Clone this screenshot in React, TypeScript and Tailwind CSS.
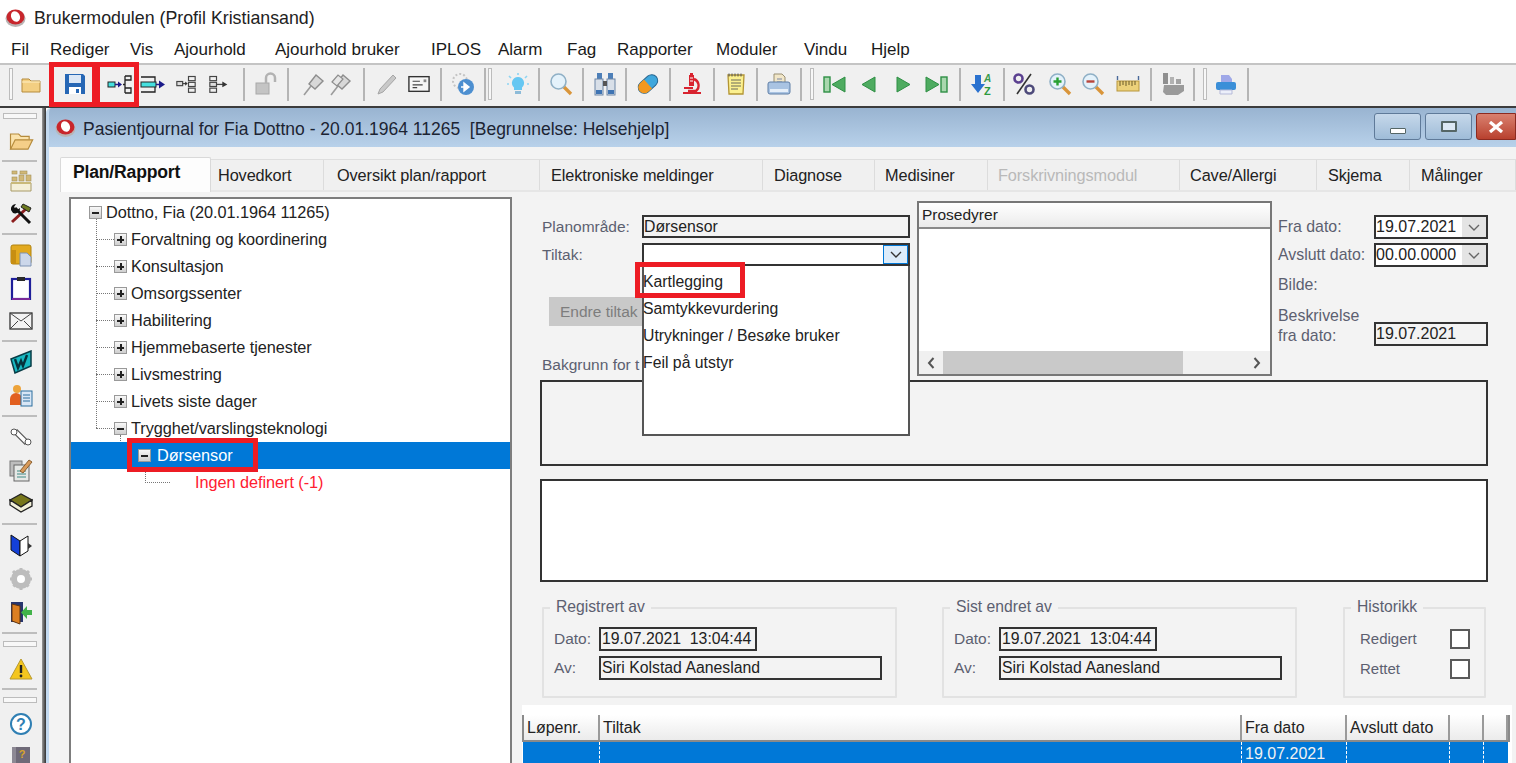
import React from 'react';

const FONT = "font-['Liberation_Sans',Arial,sans-serif]";

function Svg({ children, size = 24 }: { children: React.ReactNode; size?: number }) {
  return (
    <svg width={size} height={size} viewBox="0 0 24 24" fill="none">
      {children}
    </svg>
  );
}

/* ---------- logo ---------- */
function Logo() {
  return (
    <svg width="21" height="20" viewBox="0 0 21 20">
      <ellipse cx="10.5" cy="10.5" rx="10" ry="8.5" fill="#b9b4b4" />
      <ellipse cx="10.5" cy="9" rx="9" ry="7.6" fill="#c8262c" />
      <ellipse cx="10.5" cy="8.5" rx="4.4" ry="5.4" fill="#fff" transform="rotate(-25 10.5 8.5)" />
    </svg>
  );
}

/* ---------- toolbar icons ---------- */
const FolderClosed = () => (
  <Svg>
    <path d="M3 7h7l2 2h9v11H3z" fill="#f3cf82" stroke="#b58b3c" />
    <path d="M3 10h18" stroke="#fff0c4" />
  </Svg>
);
const FolderOpen = () => (
  <Svg size={28}>
    <path d="M3 19V6h7l2 2h7v3" fill="#fbe3ac" stroke="#b58b3c" />
    <path d="M3 19l4-8h15l-4 8z" fill="#f5cf88" stroke="#b58b3c" />
  </Svg>
);
const Save = () => (
  <Svg>
    <path d="M2 2h18l2 2v18H2z" fill="#2667b5" />
    <rect x="6" y="3" width="12" height="8" fill="#dbe7f6" />
    <rect x="6" y="15" width="12" height="7" fill="#fff" />
    <rect x="13" y="17" width="3" height="4" fill="#2667b5" />
  </Svg>
);
const TreeArrow = () => (
  <svg width="26" height="24" viewBox="0 0 26 24" fill="none">
    <rect x="1" y="10" width="7" height="5" fill="#45e0df" stroke="#222" />
    <path d="M8 12.5h4" stroke="#1b1b8a" strokeWidth="1.5" />
    <path d="M11 9.5l4 3-4 3z" fill="#1b1b8a" />
    <path d="M16 12.5h2M18 4v17M18 4h6v4h-6M18 16h6v5h-6" stroke="#222" strokeWidth="1.3" />
  </svg>
);
const BoxArrow = () => (
  <svg width="26" height="24" viewBox="0 0 26 24" fill="none">
    <path d="M1 5h14v15H1" stroke="#222" strokeWidth="1.3" />
    <rect x="1" y="10" width="15" height="5" fill="#45e0df" stroke="#222" />
    <path d="M16 12.5h5" stroke="#1b1b8a" strokeWidth="1.5" />
    <path d="M19 8.5l6 4-6 4z" fill="#1b1b8a" />
  </svg>
);
const TreeSmallA = () => (
  <Svg size={20}>
    <rect x="1" y="9" width="7" height="5" fill="#ddd" stroke="#444" strokeWidth="1.4" />
    <path d="M8 11.5h4" stroke="#444" strokeWidth="1.5" />
    <path d="M11 9l3 2.5-3 2.5z" fill="#333" />
    <rect x="15" y="3" width="8" height="5" stroke="#444" strokeWidth="1.4" />
    <rect x="15" y="10" width="8" height="5" stroke="#444" strokeWidth="1.4" />
    <rect x="15" y="17" width="8" height="5" stroke="#444" strokeWidth="1.4" />
  </Svg>
);
const TreeSmallB = () => (
  <Svg size={20}>
    <rect x="1" y="3" width="8" height="5" stroke="#444" strokeWidth="1.4" />
    <rect x="1" y="10" width="8" height="5" fill="#ddd" stroke="#444" strokeWidth="1.4" />
    <rect x="1" y="17" width="8" height="5" stroke="#444" strokeWidth="1.4" />
    <path d="M9 12.5h8" stroke="#444" strokeWidth="1.5" />
    <path d="M16 9l6 3.5-6 3.5z" fill="#333" />
  </Svg>
);
const Lock = () => (
  <Svg>
    <rect x="2" y="11" width="13" height="11" fill="#c4c4c4" stroke="#a8a8a8" />
    <path d="M12 11V6a4.5 4.5 0 0 1 9 0v4" stroke="#b2b2b2" strokeWidth="2.5" />
  </Svg>
);
const Pin = ({ double }: { double?: boolean }) => (
  <Svg>
    <path d="M2 23l7-9" stroke="#9b9b9b" strokeWidth="1.6" />
    <path d="M7 12l7-9 7 6-8 8z" fill="#d8d8d8" stroke="#8d8d8d" strokeWidth="1.4" />
    {double && <path d="M3 10l6-7 5 4-6 7z" fill="#e6e6e6" stroke="#8d8d8d" strokeWidth="1.2" />}
  </Svg>
);
const Pencil = () => (
  <Svg>
    <path d="M3 22l2-5L18 3l3 3L8 20z" fill="#c9c9c9" stroke="#a5a5a5" />
  </Svg>
);
const Card = () => (
  <Svg>
    <rect x="1" y="4" width="22" height="16" fill="#f6f6f6" stroke="#333" strokeWidth="1.5" />
    <path d="M5 9h8M5 13h11M5 16h5" stroke="#444" strokeWidth="1.3" />
    <rect x="17" y="7" width="3" height="3" fill="#888" />
  </Svg>
);
const GlobeArrow = () => (
  <Svg>
    <circle cx="9" cy="9" r="7" fill="none" stroke="#c4c4c4" strokeDasharray="2 2" strokeWidth="2" />
    <circle cx="15" cy="15" r="8" fill="#4d8fd0" />
    <path d="M10 15h6M13 11l5 4-5 4z" fill="#fff" stroke="#fff" strokeWidth="1.4" />
  </Svg>
);
const Bulb = () => (
  <Svg>
    <path d="M12 5a6 6 0 0 0-4 10.5V18h8v-2.5A6 6 0 0 0 12 5z" fill="#66c7f2" />
    <rect x="9" y="19" width="6" height="3" fill="#8dbbd8" />
    <path d="M12 1v2M3 4l2 2M21 4l-2 2M1 12h2M21 12h2" stroke="#8ed4f2" strokeWidth="1.6" />
  </Svg>
);
const Magnifier = ({ mark }: { mark?: '+' | '-' }) => (
  <Svg>
    <path d="M14 14l8 8" stroke="#d9953a" strokeWidth="3.4" />
    <circle cx="9.5" cy="9.5" r="7.5" fill="#e4f2fb" stroke="#8fb0c6" strokeWidth="1.6" />
    {mark === '+' && <path d="M5.5 9.5h8M9.5 5.5v8" stroke="#28a033" strokeWidth="2.4" />}
    {mark === '-' && <path d="M5.5 9.5h8" stroke="#b8453b" strokeWidth="2.4" />}
  </Svg>
);
const Binoculars = () => (
  <Svg>
    <rect x="4" y="1" width="5" height="6" fill="#4d7fb8" />
    <rect x="15" y="1" width="5" height="6" fill="#4d7fb8" />
    <rect x="2" y="7" width="8" height="16" fill="#d8dfe8" stroke="#6d86a6" />
    <rect x="14" y="7" width="8" height="16" fill="#d8dfe8" stroke="#6d86a6" />
    <rect x="10" y="9" width="4" height="5" fill="#555" />
    <rect x="3" y="18" width="6" height="4" fill="#3f74b3" />
    <rect x="15" y="18" width="6" height="4" fill="#3f74b3" />
  </Svg>
);
const Pill = () => (
  <Svg>
    <g transform="rotate(-42 12 12)">
      <rect x="1" y="6" width="22" height="12" rx="6" fill="#3fa7dc" stroke="#23648f" />
      <path d="M12 6H7a6 6 0 0 0 0 12h5z" fill="#f2981f" />
    </g>
  </Svg>
);
const Microscope = () => (
  <Svg>
    <path d="M3 22h18v-2H3z" fill="#d8232f" />
    <path d="M9 3h5v11H9z" fill="#d8232f" />
    <path d="M14 7a7 7 0 0 1 2 12H8" stroke="#d8232f" strokeWidth="2.4" />
    <path d="M4 15h9v2H4z" fill="#d8232f" />
    <rect x="10" y="1" width="3" height="2" fill="#d8232f" />
    <path d="M10 6h3M10 9h3" stroke="#fff" />
  </Svg>
);
const Notepad = () => (
  <Svg>
    <path d="M4 3h16l-1 19H5z" fill="#fbf08f" stroke="#b39534" strokeWidth="1.3" />
    <path d="M7 8h10M7 11h10M7 14h10M7 17h7" stroke="#6a6a5a" />
    <path d="M5 1.5v3M8 1.5v3M11 1.5v3M14 1.5v3M17 1.5v3" stroke="#555" />
  </Svg>
);
const Printer = () => (
  <Svg>
    <path d="M7 2h8l3 3v7H7z" fill="#f1e6c8" stroke="#9a8f72" />
    <path d="M10 7h5M10 10h5" stroke="#7b86a5" />
    <rect x="1" y="10" width="22" height="12" rx="2" fill="#a9c3e2" stroke="#5f7ea6" />
    <rect x="3" y="17" width="18" height="3" fill="#e6eff9" />
  </Svg>
);
const NavFirst = () => (
  <Svg>
    <rect x="1" y="5" width="6" height="15" fill="#a9d7ae" stroke="#2e8f45" strokeWidth="1.4" />
    <path d="M22 5v15L9 12.5z" fill="#4eab60" stroke="#2e8f45" />
  </Svg>
);
const NavPrev = () => (
  <Svg>
    <path d="M18 5v15L5 12.5z" fill="#4eab60" stroke="#2e8f45" />
  </Svg>
);
const NavNext = () => (
  <Svg>
    <path d="M6 5v15l13-7.5z" fill="#4eab60" stroke="#2e8f45" />
  </Svg>
);
const NavLast = () => (
  <Svg>
    <path d="M2 5v15l13-7.5z" fill="#4eab60" stroke="#2e8f45" />
    <rect x="17" y="5" width="6" height="15" fill="#a9d7ae" stroke="#2e8f45" strokeWidth="1.4" />
  </Svg>
);
const SortAZ = () => (
  <Svg>
    <path d="M5 3h6v9h4l-7 9-7-9h4z" fill="#2b72cf" />
    <text x="14" y="10" fontSize="10" fontWeight="700" fontStyle="italic" fill="#3a9a4a" fontFamily="Liberation Sans">A</text>
    <text x="14" y="23" fontSize="11" fontWeight="700" fill="#2d9a3e" fontFamily="Liberation Sans">Z</text>
  </Svg>
);
const Percent = () => (
  <Svg>
    <circle cx="6.5" cy="6.5" r="4" stroke="#5b4090" strokeWidth="2.6" />
    <circle cx="17.5" cy="17.5" r="4" stroke="#4d4a7a" strokeWidth="2.6" />
    <path d="M19 2L5 22" stroke="#333" strokeWidth="1.6" />
  </Svg>
);
const Ruler = () => (
  <Svg>
    <rect x="1" y="9" width="22" height="10" fill="#ecd17a" stroke="#b8963c" />
    <path d="M4 9v5M7 9v4M10 9v5M13 9v4M16 9v5M19 9v4" stroke="#6a5a2a" />
    <path d="M1.5 4v4M22.5 4v4" stroke="#4a6a9a" strokeWidth="1.4" />
  </Svg>
);
const GrayMachine = () => (
  <Svg>
    <rect x="2" y="1" width="5" height="11" fill="#8f8f8f" />
    <rect x="9" y="5" width="4" height="7" fill="#b2b2b2" />
    <rect x="15" y="7" width="5" height="5" fill="#a3a3a3" />
    <path d="M3 13h20v6l-6 4H5l-3-3z" fill="#9a9a9a" />
  </Svg>
);
const Printer2 = () => (
  <Svg>
    <path d="M7 3h8l3 4v5H7z" fill="#9fa8e8" />
    <rect x="2" y="10" width="20" height="8" rx="2" fill="#3b8fd8" />
    <path d="M6 18h12v4H6z" fill="#eceffa" stroke="#b5b9d8" />
  </Svg>
);

/* ---------- left bar icons ---------- */
const Bricks = () => (
  <Svg>
    <path d="M2 14h20v8H2z" fill="#f4efd9" stroke="#a89a66" />
    <path d="M2 14h20" stroke="#c9b97a" strokeWidth="2" />
    <g fill="#d1b877" stroke="#a3915a" strokeWidth=".6">
      <rect x="3" y="2" width="5" height="3" />
      <rect x="11" y="2" width="7" height="3" />
      <rect x="3" y="8" width="5" height="4" />
      <rect x="10" y="6" width="5" height="6" />
      <rect x="17" y="6" width="5" height="6" />
    </g>
  </Svg>
);
const Tools = () => (
  <Svg>
    <path d="M3 20L19 5" stroke="#8c1d1d" strokeWidth="3" />
    <path d="M14 2l8 4-2 4-8-5z" fill="#6d7a1f" stroke="#222" />
    <path d="M21 21L6 6" stroke="#111" strokeWidth="3" />
    <path d="M2 8a5 5 0 0 1 5-6L5 5l3 3 3-2a5 5 0 0 1-7 5z" fill="#111" />
  </Svg>
);
const FolderDoc = () => (
  <Svg>
    <rect x="2" y="2" width="20" height="19" rx="2" fill="#e2a91f" stroke="#b0820f" />
    <path d="M2 7h5v14H2z" fill="#c78e12" />
    <path d="M11 10h7l4 4v9H11z" fill="#ccd7ea" stroke="#7f93b4" />
  </Svg>
);
const Clipboard = () => (
  <Svg>
    <rect x="3" y="3" width="18" height="20" fill="#fff" stroke="#1f1f9a" strokeWidth="2.2" />
    <path d="M3 23h18" stroke="#7a2a9a" strokeWidth="2" />
    <rect x="8" y="1" width="8" height="4" fill="#2a2a2a" />
  </Svg>
);
const Envelope = () => (
  <Svg>
    <rect x="1" y="4" width="22" height="16" fill="#f3f3f3" stroke="#333" strokeWidth="1.3" />
    <path d="M1 4l11 8 11-8M1 20l8-8M23 20l-8-8" stroke="#444" />
  </Svg>
);
const WBook = () => (
  <Svg>
    <path d="M2 9l20-8v15L6 23z" fill="#17b8c1" stroke="#083c46" strokeWidth="1.5" />
    <path d="M6 9l3 9 3-7 2 5 4-11" stroke="#06333c" strokeWidth="2.4" />
  </Svg>
);
const PersonCard = () => (
  <Svg>
    <circle cx="8" cy="6" r="4" fill="#eda33a" />
    <path d="M1 22v-6a6 6 0 0 1 12 0v6z" fill="#e25f1f" />
    <rect x="12" y="8" width="11" height="15" fill="#d8e6f5" stroke="#2c6f9e" />
    <path d="M14 12h7M14 15h7M14 18h7" stroke="#2c6f9e" />
  </Svg>
);
const Bone = () => (
  <Svg>
    <path d="M6 6l12 12" stroke="#555" strokeWidth="6" />
    <path d="M6 6l12 12" stroke="#fff" strokeWidth="3.6" />
    <circle cx="5" cy="7" r="3" fill="#fff" stroke="#555" />
    <circle cx="19" cy="17" r="3" fill="#fff" stroke="#555" />
  </Svg>
);
const NotePen = () => (
  <Svg>
    <rect x="1" y="3" width="12" height="15" fill="#bdbdbd" stroke="#777" />
    <rect x="5" y="7" width="15" height="16" fill="#e6e8e6" stroke="#666" />
    <path d="M8 13h9M8 16h9M8 19h9" stroke="#3e8a84" />
    <path d="M11 13l9-11 3 2-9 11z" fill="#d99a5a" stroke="#8a5f2f" />
  </Svg>
);
const OliveBook = () => (
  <Svg>
    <path d="M1 9l11-6 11 6-11 7z" fill="#77761a" stroke="#222" strokeWidth="1.3" />
    <path d="M1 9v5l11 7 11-6V9l-11 7z" fill="#f2f0d8" stroke="#222" strokeWidth="1.3" />
  </Svg>
);
const BlueBook = () => (
  <Svg>
    <path d="M2 2l9 6v15L2 17z" fill="#1440d8" stroke="#111" />
    <path d="M11 8l8-5v15l-8 5z" fill="#fff" stroke="#111" />
    <path d="M19 10l4 3-4 3z" fill="#333" />
  </Svg>
);
const Gear = () => (
  <Svg>
    <circle cx="12" cy="12" r="7" fill="#fff" stroke="#bdbdbd" strokeWidth="6" />
    <path d="M12 1v22M1 12h22M4 4l16 16M20 4L4 20" stroke="#bdbdbd" strokeWidth="3" strokeDasharray="3 16" />
  </Svg>
);
const Door = () => (
  <Svg>
    <path d="M2 1h12v20H2z" fill="#27366e" />
    <path d="M3 3l8 2v18l-8-3z" fill="#dc7f22" stroke="#5e3410" />
    <path d="M23 9h-5V5l-6 6.5 6 6.5v-4h5z" fill="#42b34a" />
  </Svg>
);
const Warning = () => (
  <Svg>
    <path d="M12 2l11 20H1z" fill="#f4c61f" stroke="#b89a30" />
    <path d="M12 8v8" stroke="#222" strokeWidth="2.4" />
    <circle cx="12" cy="19" r="1.4" fill="#222" />
  </Svg>
);
const Help = () => (
  <Svg>
    <circle cx="12" cy="12" r="10" fill="#fff" stroke="#2f7fb3" strokeWidth="2" />
    <text x="12" y="18" textAnchor="middle" fontSize="16" fontWeight="700" fill="#2f7fb3" fontFamily="Liberation Sans">?</text>
  </Svg>
);
const HelpBook = () => (
  <Svg>
    <rect x="3" y="3" width="18" height="21" fill="#6f6a78" />
    <rect x="3" y="3" width="4" height="21" fill="#8d8994" />
    <text x="13" y="14" textAnchor="middle" fontSize="11" fontWeight="700" fill="#d8a52a" fontFamily="Liberation Sans">?</text>
  </Svg>
);

/* ---------- shell pieces ---------- */
const menus: [string, string][] = [
  ['Fil', 'w-[39px]'],
  ['Rediger', 'w-[80px]'],
  ['Vis', 'w-[44px]'],
  ['Ajourhold', 'w-[101px]'],
  ['Ajourhold bruker', 'w-[156px]'],
  ['IPLOS', 'w-[67px]'],
  ['Alarm', 'w-[69px]'],
  ['Fag', 'w-[50px]'],
  ['Rapporter', 'w-[99px]'],
  ['Moduler', 'w-[88px]'],
  ['Vindu', 'w-[67px]'],
  ['Hjelp', 'w-[50px]'],
];

function Grip() {
  return <div className="mx-[2px] h-[32px] w-[4px] shrink-0 border border-[#bcbcbc] bg-[#f7f7f7]" />;
}
function Sep({ className = '' }: { className?: string }) {
  return <div className={`h-[33px] w-[2px] shrink-0 bg-[#b5b5b5] ${className}`} />;
}
function TB({ w, children }: { w: string; children: React.ReactNode }) {
  return <div className={`flex h-[34px] shrink-0 items-center justify-center ${w}`}>{children}</div>;
}

function Toolbar() {
  return (
    <div className="flex h-[43px] items-center border-t-2 border-[#c4c4c4] bg-[#f0f0f0] pb-[3px] pl-[7px]">
      <Grip />
      <TB w="w-[33px] ml-[-1px]"><FolderClosed /></TB>
      <TB w="w-[33px] ml-[11px]"><Save /></TB>
      <TB w="w-[33px] ml-[12px]"><TreeArrow /></TB>
      <TB w="w-[33px]"><BoxArrow /></TB>
      <TB w="w-[33px]"><TreeSmallA /></TB>
      <TB w="w-[34px]"><TreeSmallB /></TB>
      <Sep className="ml-[7px]" />
      <TB w="w-[42px]"><Lock /></TB>
      <Sep />
      <TB w="w-[27px] ml-[11px]"><Pin /></TB>
      <TB w="w-[28px]"><Pin double /></TB>
      <Sep className="ml-[8px]" />
      <TB w="w-[43px]"><Pencil /></TB>
      <TB w="w-[22px]"><Card /></TB>
      <Sep className="ml-[10px]" />
      <TB w="w-[42px]"><GlobeArrow /></TB>
      <Sep />
      <Grip />
      <TB w="w-[33px] ml-[7px]"><Bulb /></TB>
      <Sep className="ml-[4px]" />
      <TB w="w-[42px]"><Magnifier /></TB>
      <Sep />
      <TB w="w-[41px]"><Binoculars /></TB>
      <Sep />
      <TB w="w-[42px]"><Pill /></TB>
      <Sep />
      <TB w="w-[42px]"><Microscope /></TB>
      <Sep />
      <TB w="w-[41px]"><Notepad /></TB>
      <Sep />
      <TB w="w-[42px]"><Printer /></TB>
      <Sep />
      <div className="ml-[6px]"><Grip /></div>
      <TB w="w-[34px] ml-[2px]"><NavFirst /></TB>
      <TB w="w-[33px]"><NavPrev /></TB>
      <TB w="w-[35px]"><NavNext /></TB>
      <TB w="w-[31px]"><NavLast /></TB>
      <Sep className="ml-[8px]" />
      <TB w="w-[42px]"><SortAZ /></TB>
      <Sep />
      <TB w="w-[38px]"><Percent /></TB>
      <TB w="w-[33px]"><Magnifier mark="+" /></TB>
      <TB w="w-[34px]"><Magnifier mark="-" /></TB>
      <TB w="w-[36px]"><Ruler /></TB>
      <Sep className="ml-[4px]" />
      <TB w="w-[41px]"><GrayMachine /></TB>
      <Sep />
      <div className="ml-[6px]"><Grip /></div>
      <TB w="w-[33px]"><Printer2 /></TB>
      <Sep className="ml-[5px]" />
    </div>
  );
}

function SideIcon({ h = 'h-[33px]', children }: { h?: string; children: React.ReactNode }) {
  return <div className={`flex shrink-0 items-center justify-center ${h}`}>{children}</div>;
}
function SideSep({ h }: { h: string }) {
  return (
    <div className={`flex shrink-0 items-center ${h}`}>
      <div className="mx-[2px] h-[2px] w-[35px] bg-[#bdbdbd]" />
    </div>
  );
}
function SideGrip() {
  return (
    <div className="flex h-[16px] shrink-0 items-center">
      <div className="ml-[3px] h-[6px] w-[34px] border border-[#bcbcbc] bg-[#f8f8f8]" />
    </div>
  );
}

function SideBar() {
  return (
    <div className="flex w-[42px] shrink-0 flex-col bg-[#f0f0f0]">
      <SideGrip />
      <SideIcon><FolderOpen /></SideIcon>
      <SideSep h="h-[7px]" />
      <SideIcon><Bricks /></SideIcon>
      <SideIcon><Tools /></SideIcon>
      <SideSep h="h-[8px]" />
      <SideIcon><FolderDoc /></SideIcon>
      <SideIcon><Clipboard /></SideIcon>
      <SideIcon><Envelope /></SideIcon>
      <SideSep h="h-[8px]" />
      <SideIcon><WBook /></SideIcon>
      <SideIcon><PersonCard /></SideIcon>
      <SideSep h="h-[9px]" />
      <SideIcon><Bone /></SideIcon>
      <SideIcon><NotePen /></SideIcon>
      <SideIcon><OliveBook /></SideIcon>
      <SideSep h="h-[9px]" />
      <SideIcon><BlueBook /></SideIcon>
      <SideIcon h="h-[35px]"><Gear /></SideIcon>
      <SideIcon><Door /></SideIcon>
      <SideSep h="h-[7px]" />
      <SideGrip />
      <SideIcon><Warning /></SideIcon>
      <SideSep h="h-[7px]" />
      <SideGrip />
      <SideIcon h="h-[32px]"><Help /></SideIcon>
      <SideIcon h="h-[32px]"><HelpBook /></SideIcon>
    </div>
  );
}

function WinButton({ className, children }: { className: string; children: React.ReactNode }) {
  return (
    <div className={`flex h-[27px] items-center justify-center rounded-[3px] border border-[#5f7a99] ${className}`}>
      {children}
    </div>
  );
}

const tabs: [string, string, string, string?][] = [
  ['Hovedkort', 'w-[113px]', 'pl-[7px]'],
  ['Oversikt plan/rapport', 'w-[216px]', 'pl-[13px]'],
  ['Elektroniske meldinger', 'w-[223px]', 'pl-[11px]'],
  ['Diagnose', 'w-[112px]', 'pl-[11px]'],
  ['Medisiner', 'w-[113px]', 'pl-[10px]'],
  ['Forskrivningsmodul', 'w-[192px]', 'pl-[10px]', 'text-[#b9b9b9]'],
  ['Cave/Allergi', 'w-[137px]', 'pl-[10px]'],
  ['Skjema', 'w-[93px]', 'pl-[11px]'],
  ['Målinger', 'w-[106px]', 'pl-[11px]'],
];

function Tabs() {
  return (
    <div className="flex h-[45px] items-end pl-[11px]">
      <div className="z-10 flex h-[35px] w-[151px] shrink-0 items-center rounded-t-[2px] border-x border-t border-[#d9d9d9] bg-[#fdfdfd] pb-[5px] pl-[12px] text-[17.6px] font-bold tracking-[-0.2px] text-[#111]">
        Plan/Rapport
      </div>
      <div className="flex h-[33px] border-y border-t-[#dedede] border-b-[#e6e6e6] bg-[#f0f0f0] border-b-2">
        {tabs.map(([label, w, pl, color]) => (
          <div
            key={label}
            className={`flex h-full shrink-0 items-center border-r border-[#dcdcdc] text-[16.3px] tracking-[-0.1px] ${w} ${pl} ${color ?? 'text-[#222]'}`}
          >
            {label}
          </div>
        ))}
      </div>
    </div>
  );
}

/* ---------- tree ---------- */
function Expander({ open }: { open?: boolean }) {
  return (
    <div className="flex h-[13px] w-[13px] shrink-0 items-center justify-center border border-[#999] bg-gradient-to-b from-[#f8f8f8] to-[#cfcfcf]">
      <div className="relative h-[2px] w-[7px] bg-[#222]">
        {!open && <div className="absolute left-[2.5px] top-[-2.5px] h-[7px] w-[2px] bg-[#222]" />}
      </div>
    </div>
  );
}
const children = [
  'Forvaltning og koordinering',
  'Konsultasjon',
  'Omsorgssenter',
  'Habilitering',
  'Hjemmebaserte tjenester',
  'Livsmestring',
  'Livets siste dager',
];
function Tree() {
  return (
    <div className="relative ml-[20px] h-[568px] w-[443px] shrink-0 overflow-hidden border-2 border-[#7d7d7d] bg-white text-[16.3px] tracking-[-0.05px] text-[#222]">
      <div className="absolute left-[25px] top-[20px] h-[209px] border-l border-dotted border-[#777]" />
      <div className="absolute left-[49px] top-[236px] h-[20px] border-l border-dotted border-[#777]" />
      <div className="absolute left-[74px] top-[264px] h-[18px] border-l border-dotted border-[#777]" />
      <div className="flex h-[27px] items-center pl-[18px]">
        <Expander open />
        <span className="ml-[4px]">Dottno, Fia (20.01.1964 11265)</span>
      </div>
      {children.map(c => (
        <div key={c} className="flex h-[27px] items-center pl-[25px]">
          <div className="w-[18px] border-b border-dotted border-[#777]" />
          <Expander />
          <span className="ml-[4px]">{c}</span>
        </div>
      ))}
      <div className="flex h-[27px] items-center pl-[25px]">
        <div className="w-[18px] border-b border-dotted border-[#777]" />
        <Expander open />
        <span className="ml-[4px]">Trygghet/varslingsteknologi</span>
      </div>
      <div className="relative flex h-[27px] items-center bg-[#0078d7] pl-[67px] text-white">
        <Expander open />
        <span className="ml-[6px]">Dørsensor</span>
      </div>
      <div className="flex h-[27px] items-center pl-[74px] text-[#ff2030]">
        <div className="w-[25px] border-b border-dotted border-[#777]" />
        <span className="ml-[25px]">Ingen definert (-1)</span>
      </div>
      <div className="absolute left-[56px] top-[239px] h-[34px] w-[131px] border-[5px] border-[#ed1c24]" />
    </div>
  );
}

/* ---------- form ---------- */
function Chevron({ color = '#333' }: { color?: string }) {
  return (
    <svg width="12" height="7" viewBox="0 0 12 7" fill="none">
      <path d="M1 1l5 5 5-5" stroke={color} strokeWidth="1.4" />
    </svg>
  );
}

function Field({ className, children }: { className: string; children?: React.ReactNode }) {
  return (
    <div className={`flex items-center overflow-hidden whitespace-nowrap border-2 border-[#333] text-[15.8px] leading-none text-[#222] ${className}`}>
      {children}
    </div>
  );
}

function DateCombo({ value, className }: { value: string; className?: string }) {
  return (
    <Field className={`h-[24px] w-[114px] bg-white ${className ?? ''}`}>
      <span className="w-[86px] text-[16px]">{value}</span>
      <div className="flex h-full flex-1 items-center justify-center bg-[#e4e4e4]">
        <Chevron color="#666" />
      </div>
    </Field>
  );
}

function LeftForm() {
  return (
    <div className="relative ml-[18px] w-[370px] shrink-0 pt-[25px] text-[15.5px] text-[#5c6070]">
      <div className="flex h-[23px] items-center">
        <span className="ml-[2px] w-[100px]">Planområde:</span>
        <Field className="h-[23px] w-[268px] bg-[#f3f3f3]">Dørsensor</Field>
      </div>
      <div className="mt-[5px] flex h-[23px] items-center">
        <span className="ml-[2px] w-[100px] self-start">Tiltak:</span>
        <Field className="h-[23px] w-[268px] bg-white">
          <div className="ml-auto flex h-full w-[25px] items-center justify-center border border-[#0078d7] bg-[#dcecfa]">
            <Chevron />
          </div>
        </Field>
      </div>
      <div className="ml-[9px] mt-[31px] flex h-[29px] w-[120px] items-center bg-[#c9c9c9] pl-[11px] text-[#7d7d7d]">
        Endre tiltak
      </div>
      <div className="ml-[2px] mt-[27px] h-[20px]">Bakgrunn for t</div>
      {/* open dropdown list */}
      <div className="absolute left-[102px] top-[76px] z-20 h-[170px] w-[268px] border-2 border-t-0 border-[#555] bg-white pt-[2px] text-[15.8px] text-[#222]">
        {['Kartlegging', 'Samtykkevurdering', 'Utrykninger / Besøke bruker', 'Feil på utstyr'].map(t => (
          <div key={t} className="ml-[-1px] flex h-[27px] items-center">{t}</div>
        ))}
      </div>
      <div className="absolute left-[95px] top-[72px] z-30 h-[36px] w-[110px] border-[5px] border-[#ed1c24]" />
    </div>
  );
}

function Prosedyrer() {
  return (
    <div className="ml-[7px] mt-[11px] flex h-[175px] w-[355px] shrink-0 flex-col border-2 border-[#777] bg-white">
      <div className="flex h-[26px] items-center border-b-2 border-[#8a8a8a] bg-gradient-to-b from-white to-[#ebebeb] pl-[3px] text-[15.5px] text-[#222]">
        Prosedyrer
      </div>
      <div className="flex-1" />
      <div className="flex h-[23px] items-center bg-[#f0f0f0]">
        <div className="flex w-[24px] justify-center">
          <svg width="8" height="12" viewBox="0 0 8 12" fill="none"><path d="M6.5 1L2 6l4.5 5" stroke="#555" strokeWidth="2" /></svg>
        </div>
        <div className="h-full w-[240px] bg-[#c9c9c9]" />
        <div className="ml-auto flex w-[26px] justify-center">
          <svg width="8" height="12" viewBox="0 0 8 12" fill="none"><path d="M1.5 1L6 6l-4.5 5" stroke="#555" strokeWidth="2" /></svg>
        </div>
      </div>
    </div>
  );
}

function RightForm() {
  return (
    <div className="ml-[6px] w-[210px] shrink-0 pt-[25px] text-[15.9px] text-[#5c6070]">
      <div className="flex h-[24px] items-center">
        <span className="w-[96px]">Fra dato:</span>
        <DateCombo value="19.07.2021" />
      </div>
      <div className="mt-[4px] flex h-[24px] items-center">
        <span className="w-[96px]">Avslutt dato:</span>
        <DateCombo value="00.00.0000" />
      </div>
      <div className="mt-[6px] h-[20px]">Bilde:</div>
      <div className="mt-[13px] flex items-end">
        <div className="w-[96px] leading-[20px]">Beskrivelse<br />fra dato:</div>
        <Field className="h-[24px] w-[114px] bg-[#f3f3f3] text-[16px]">19.07.2021</Field>
      </div>
    </div>
  );
}

function Group({ title, className, children }: { title: string; className: string; children: React.ReactNode }) {
  return (
    <div className={`relative h-[91px] shrink-0 rounded-[1px] border-2 border-[#e2e2e2] ${className}`}>
      <div className="absolute left-[6px] top-[-12px] bg-[#f3f3f3] px-[6px] text-[15.7px] leading-[20px] text-[#5c6070]">{title}</div>
      {children}
    </div>
  );
}

function PersonGroup({ title, className, w }: { title: string; className: string; w: string }) {
  return (
    <Group title={title} className={className}>
      <div className="flex flex-col gap-[5px] pl-[10px] pt-[18px] text-[15.5px] text-[#5c6070]">
        <div className="flex h-[24px] items-center">
          <span className="w-[45px]">Dato:</span>
          <Field className="h-[24px] w-[158px] bg-[#f3f3f3] pl-[1px]">19.07.2021&nbsp;&nbsp;13:04:44</Field>
        </div>
        <div className="flex h-[24px] items-center">
          <span className="w-[45px]">Av:</span>
          <Field className={`h-[24px] bg-[#f3f3f3] pl-[1px] ${w}`}>Siri Kolstad Aanesland</Field>
        </div>
      </div>
    </Group>
  );
}

function Check() {
  return <div className="h-[20px] w-[20px] border-2 border-[#5a5a5a] bg-white" />;
}

const cols: [string, string][] = [
  ['Løpenr.', 'w-[76px]'],
  ['Tiltak', 'w-[642px]'],
  ['Fra dato', 'w-[105px]'],
  ['Avslutt dato', 'w-[103px]'],
  ['', 'w-[34px]'],
  ['', 'w-[24px]'],
];

function Grid() {
  return (
    <div className="mt-[7px] h-[58px] w-[990px] bg-white pt-[10px]">
      <div className="flex h-[27px] w-[988px] border-x-2 border-b-2 border-[#8a8a8a] bg-gradient-to-b from-white to-[#ebebeb] text-[16px] text-[#222]">
        {cols.map(([label, w], i) => (
          <div key={i} className={`flex h-full shrink-0 items-center border-r-2 border-[#9a9a9a] pl-[3px] ${w}`}>{label}</div>
        ))}
      </div>
      <div className="ml-[1px] flex h-[21px] w-[985px] bg-[#0078d7] text-[16px] text-[#f2f2f2]">
        <div className="w-[77px] shrink-0 border-r border-dashed border-white" />
        <div className="w-[642px] shrink-0 border-r border-dashed border-white" />
        <div className="w-[105px] shrink-0 border-r border-dashed border-white pl-[3px]">19.07.2021</div>
        <div className="w-[103px] shrink-0 border-r border-dashed border-white" />
        <div className="w-[34px] shrink-0 border-r border-dashed border-white" />
      </div>
    </div>
  );
}

function FormPanel() {
  return (
    <div className="ml-[10px] flex w-[994px] shrink-0 flex-col">
      <div className="flex h-[190px]">
        <LeftForm />
        <Prosedyrer />
        <RightForm />
      </div>
      <div className="ml-[18px] h-[86px] w-[948px] border-2 border-[#333] bg-[#f3f3f3]" />
      <div className="ml-[18px] mt-[13px] h-[103px] w-[948px] border-2 border-[#333] bg-white" />
      <div className="mt-[25px] flex h-[91px]">
        <PersonGroup title="Registrert av" className="ml-[20px] w-[355px]" w="w-[283px]" />
        <PersonGroup title="Sist endret av" className="ml-[45px] w-[355px]" w="w-[283px]" />
        <Group title="Historikk" className="ml-[46px] w-[143px]">
          <div className="flex flex-col gap-[10px] pl-[15px] pt-[20px] text-[15px] text-[#5c6070]">
            <div className="flex h-[20px] items-center justify-between pr-[14px]">Redigert<Check /></div>
            <div className="flex h-[20px] items-center justify-between pr-[14px]">Rettet<Check /></div>
          </div>
        </Group>
      </div>
      <Grid />
    </div>
  );
}

function JournalWindow() {
  return (
    <div className="flex min-w-0 flex-1 flex-col overflow-hidden rounded-tl-[5px] border-l-[3px] border-[#c3d9ef] bg-[#f3f3f3]">
      <div className="flex h-[39px] shrink-0 items-center bg-gradient-to-b from-[#99b4d1] to-[#b8d1ea] pl-[6px]">
        <Logo />
        <span className="ml-[7px] mt-[3px] whitespace-pre text-[17.5px] text-[#1c2433]">
          Pasientjournal for Fia Dottno - 20.01.1964 11265&nbsp;&nbsp;[Begrunnelse: Helsehjelp]
        </span>
        <div className="ml-auto flex gap-[4px] pb-[2px]">
          <WinButton className="w-[47px] bg-gradient-to-b from-[#c6d8ea] to-[#9fbcd8]">
            <div className="mt-[8px] h-[6px] w-[16px] rounded-[1px] border border-[#566] bg-white" />
          </WinButton>
          <WinButton className="w-[47px] bg-gradient-to-b from-[#c6d8ea] to-[#9fbcd8]">
            <div className="h-[11px] w-[16px] rounded-[1px] border-2 border-[#566] bg-[#dce8f4]" />
          </WinButton>
          <WinButton className="w-[40px] rounded-r-none border-[#8c2a20] bg-gradient-to-b from-[#d9806f] to-[#b8402e]">
            <svg width="16" height="12" viewBox="0 0 16 12"><path d="M2 1l12 10M14 1L2 11" stroke="#fff" strokeWidth="3.2" /></svg>
          </WinButton>
        </div>
      </div>
      <Tabs />
      <div className="flex min-h-0 flex-1 pt-[5px]">
        <Tree />
        <div className="-mt-[7px]">
          <FormPanel />
        </div>
      </div>
    </div>
  );
}

export default function App() {
  return (
    <div className={`relative flex h-[763px] w-[1516px] flex-col overflow-hidden bg-white ${FONT}`}>
      <div className="flex h-[36px] shrink-0 items-center pl-[5px]">
        <Logo />
        <span className="ml-[8px] text-[17.8px] text-[#222]">Brukermodulen (Profil Kristiansand)</span>
      </div>
      <div className="flex h-[27px] shrink-0 items-center pl-[11px] text-[17px] text-[#1a1a1a]">
        {menus.map(([m, c]) => (
          <span key={m} className={`shrink-0 ${c}`}>{m}</span>
        ))}
      </div>
      <div className="relative shrink-0">
        <Toolbar />
        <div className="absolute left-[49px] top-[-1px] h-[45px] w-[48px] border-[5px] border-[#ed1c24]" />
        <div className="absolute left-[97px] top-[-1px] h-[45px] w-[42px] border-[5px] border-l-[3px] border-[#ed1c24]" />
      </div>
      <div className="flex min-h-0 flex-1 border-t-2 border-[#3c3c3c]">
        <SideBar />
        <div className="w-[4px] shrink-0 bg-gradient-to-r from-[#9a9a9a] to-[#333]" />
        <JournalWindow />
      </div>
    </div>
  );
}
